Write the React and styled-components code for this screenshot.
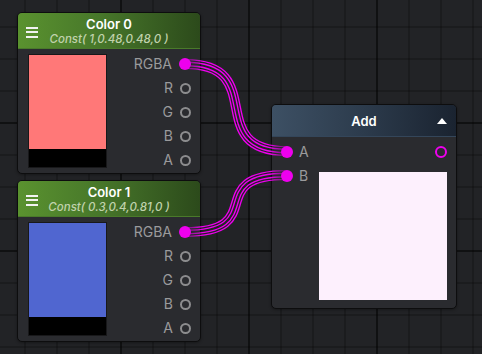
import React from 'react';
import styled, { createGlobalStyle } from 'styled-components';

const GlobalStyle = createGlobalStyle`
    html, body {
        margin: 0;
        padding: 0;
        background: #212225;
    }
    body {
        font-family: 'Inter', 'Liberation Sans', sans-serif;
    }
`;

const MAGENTA = '#ee00ee';

const Canvas = styled.div`
    position: relative;
    width: 482px;
    height: 354px;
    overflow: hidden;
    background-color: #222326;
    background-image:
        linear-gradient(to right, rgba(0,0,0,0.4) 2px, transparent 2px),
        linear-gradient(to bottom, rgba(0,0,0,0.4) 2px, transparent 2px),
        linear-gradient(to right, rgba(0,0,0,0.2) 2px, transparent 2px),
        linear-gradient(to bottom, rgba(0,0,0,0.2) 2px, transparent 2px);
    background-size: 128px 128px, 128px 128px, 32px 32px, 32px 32px;
    background-position: -8px 0, 0 -6px, 24px 0, 0 26px;
`;

const Node = styled.div`
    position: absolute;
    left: ${p => p.$x}px;
    top: ${p => p.$y}px;
    width: ${p => p.$w}px;
    height: ${p => p.$h}px;
    box-sizing: border-box;
    border: 1px solid #0d0d0e;
    border-radius: 5px;
    background: #2a2b2f;
    display: flex;
    flex-direction: column;
    overflow: hidden;
    box-shadow: 0 1px 3px rgba(0,0,0,0.35);
`;

const Header = styled.div`
    height: ${p => p.$h}px;
    flex: none;
    box-sizing: border-box;
    display: grid;
    grid-template-columns: 1fr auto 1fr;
    align-items: center;
    padding: 0 8px;
    background: ${p => p.$green
        ? 'linear-gradient(to right, #5a922f, #47772a 45%, #2c4a1b)'
        : 'linear-gradient(to right, #3d5064, #2c3b4c 50%, #1a2330)'};
    border-bottom: 1px solid ${p => p.$green ? '#4a7a2a' : '#34465a'};
`;

const Menu = styled.div`
    display: flex;
    flex-direction: column;
    gap: 2.5px;
    width: 12px;
    margin-top: 3px;
    span {
        display: block;
        height: 2px;
        background: #f2f2f2;
    }
`;

const TitleBlock = styled.div`
    text-align: center;
    margin-top: 1px;
`;

const Title = styled.div`
    color: #ffffff;
    font-size: 13px;
    font-weight: 600;
    line-height: 16px;
    margin-top: ${p => p.$offset || 0}px;
`;

const Subtitle = styled.div`
    color: #c0d2ac;
    font-size: 11.5px;
    font-weight: 500;
    font-style: italic;
    line-height: 14px;
`;

const Collapse = styled.div`
    justify-self: end;
    margin-right: 1px;
    width: 0;
    height: 0;
    border-left: 5.5px solid transparent;
    border-right: 5.5px solid transparent;
    border-bottom: 6px solid #ffffff;
`;

const ColorBody = styled.div`
    flex: 1;
    display: flex;
    padding: 0 9px 0 10px;
`;

const Swatch = styled.div`
    width: 79px;
    height: 114px;
    margin-top: 5px;
    box-sizing: border-box;
    border: 1px solid #18181a;
    display: flex;
    flex-direction: column;
    background: #000;
`;

const SwatchColor = styled.div`
    height: 94px;
    background: ${p => p.$color};
`;

const Ports = styled.div`
    flex: 1;
    display: flex;
    flex-direction: column;
    align-items: ${p => p.$left ? 'flex-start' : 'flex-end'};
    padding-top: ${p => p.$top || 0}px;
`;

const PortRow = styled.div`
    height: 24px;
    display: flex;
    align-items: center;
    gap: ${p => p.$gap || 7}px;
    flex-direction: ${p => p.$left ? 'row-reverse' : 'row'};
`;

const Label = styled.span`
    color: #9a9a9c;
    font-size: 14px;
    line-height: 1;
`;

const Dot = styled.span`
    position: relative;
    z-index: 2;
    width: ${p => p.$size || 12}px;
    height: ${p => p.$size || 12}px;
    box-sizing: border-box;
    border-radius: 50%;
    background: ${p => p.$filled ? MAGENTA : 'transparent'};
    border: ${p => p.$filled ? 'none' : `${p.$stroke || 2}px solid ${p.$color || '#8c8c8e'}`};
`;

const AddBody = styled.div`
    flex: 1;
    display: flex;
    padding: 3px 9px 0 9px;
`;

const OutColumn = styled.div`
    display: flex;
    flex-direction: column;
    align-items: flex-end;
`;

const Preview = styled.div`
    width: 128px;
    height: 128px;
    margin-top: 8px;
    background: ${p => p.$color};
`;

const Wires = styled.svg`
    position: absolute;
    left: 0;
    top: 0;
    z-index: 1;
    pointer-events: none;
`;

const wire = (x1, y1, x2, y2, dx = 85) =>
    `M ${x1} ${y1} C ${x1 + dx} ${y1}, ${x2 - dx} ${y2}, ${x2} ${y2}`;

const WIRES = [
    wire(185, 64, 287, 151),
    wire(185, 232, 287, 175),
];

const channels = ['R', 'G', 'B', 'A'];

const ColorNode = ({ x, y, title, values, color }) => (
    <Node $x={x} $y={y} $w={184} $h={162}>
        <Header $h={36} $green>
            <Menu><span /><span /><span /></Menu>
            <TitleBlock>
                <Title>{title}</Title>
                <Subtitle>{`Const( ${values} )`}</Subtitle>
            </TitleBlock>
        </Header>
        <ColorBody>
            <Swatch>
                <SwatchColor $color={color} />
            </Swatch>
            <Ports $top={3}>
                <PortRow>
                    <Label>RGBA</Label>
                    <Dot $filled />
                </PortRow>
                {channels.map(c => (
                    <PortRow key={c}>
                        <Label>{c}</Label>
                        <Dot $size={11} />
                    </PortRow>
                ))}
            </Ports>
        </ColorBody>
    </Node>
);

const App = () => (
    <>
        <GlobalStyle />
        <Canvas>
            <Wires width="482" height="354" viewBox="0 0 482 354">
                <defs>
                    <linearGradient id="fade" gradientUnits="userSpaceOnUse" x1="185" y1="0" x2="287" y2="0">
                        <stop offset="0" stopColor={MAGENTA} stopOpacity="0.3" />
                        <stop offset="0.17" stopColor={MAGENTA} stopOpacity="1" />
                        <stop offset="0.83" stopColor={MAGENTA} stopOpacity="1" />
                        <stop offset="1" stopColor={MAGENTA} stopOpacity="0.3" />
                    </linearGradient>
                    {WIRES.map((d, i) => (
                        <mask key={i} id={`wire${i}`} maskUnits="userSpaceOnUse" x="0" y="0" width="482" height="354">
                            <path d={d} fill="none" stroke="white" strokeWidth="10" />
                            <path d={d} fill="none" stroke="black" strokeWidth="7.3" />
                            <path d={d} fill="none" stroke="white" strokeWidth="4.8" />
                            <path d={d} fill="none" stroke="black" strokeWidth="2.1" />
                        </mask>
                    ))}
                </defs>
                {WIRES.map((d, i) => (
                    <rect key={i} x="0" y="0" width="482" height="354" fill="url(#fade)" mask={`url(#wire${i})`} />
                ))}
            </Wires>

            <ColorNode x={17} y={12} title="Color 0" values="1,0.48,0.48,0" color="#ff7878" />
            <ColorNode x={17} y={180} title="Color 1" values="0.3,0.4,0.81,0" color="#5066d0" />

            <Node $x={271} $y={104} $w={186} $h={205}>
                <Header $h={32}>
                    <span />
                    <Title $offset={1}>Add</Title>
                    <Collapse />
                </Header>
                <AddBody>
                    <Ports $left>
                        <PortRow $left $gap={6}>
                            <Label>A</Label>
                            <Dot $filled />
                        </PortRow>
                        <PortRow $left $gap={6}>
                            <Label>B</Label>
                            <Dot $filled />
                        </PortRow>
                    </Ports>
                    <OutColumn>
                        <PortRow>
                            <Dot $size={12} $stroke={2.5} $color={MAGENTA} />
                        </PortRow>
                        <Preview $color="#fdf0fd" />
                    </OutColumn>
                </AddBody>
            </Node>
        </Canvas>
    </>
);

export default App;
